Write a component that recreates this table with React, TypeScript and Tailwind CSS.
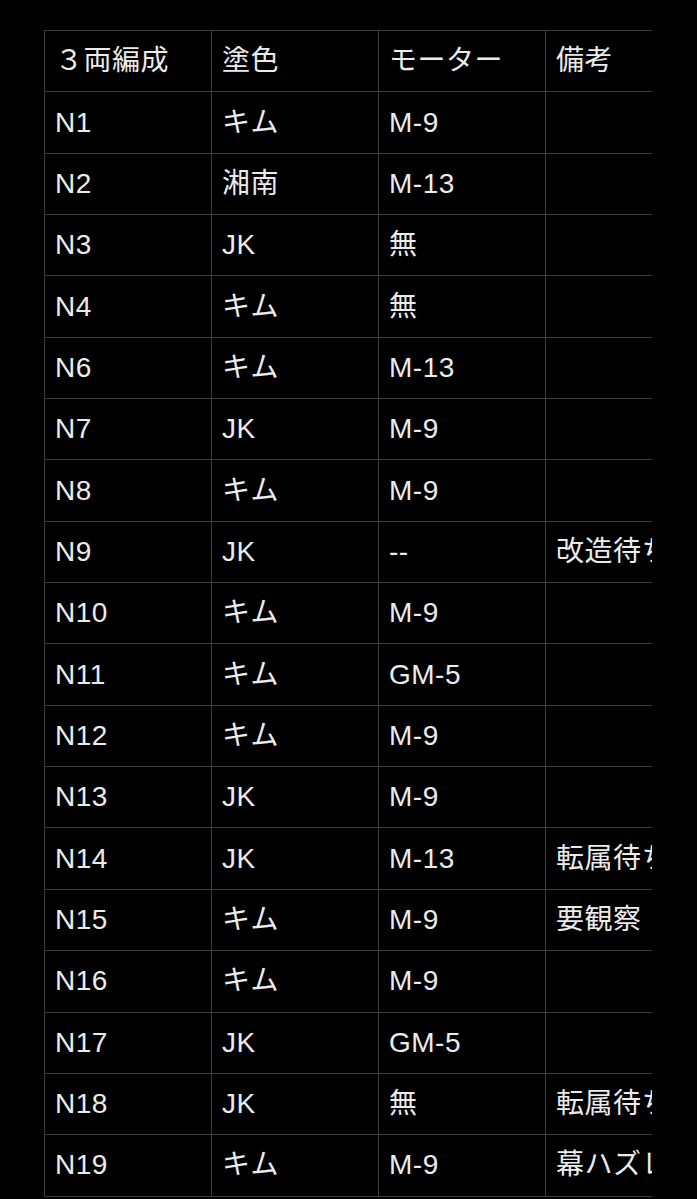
const header = ["３両編成", "塗色", "モーター", "備考"];

const rows: [string, string, string, string][] = [
  ["N1", "キム", "M-9", ""],
  ["N2", "湘南", "M-13", ""],
  ["N3", "JK", "無", ""],
  ["N4", "キム", "無", ""],
  ["N6", "キム", "M-13", ""],
  ["N7", "JK", "M-9", ""],
  ["N8", "キム", "M-9", ""],
  ["N9", "JK", "--", "改造待ち"],
  ["N10", "キム", "M-9", ""],
  ["N11", "キム", "GM-5", ""],
  ["N12", "キム", "M-9", ""],
  ["N13", "JK", "M-9", ""],
  ["N14", "JK", "M-13", "転属待ち"],
  ["N15", "キム", "M-9", "要観察"],
  ["N16", "キム", "M-9", ""],
  ["N17", "JK", "GM-5", ""],
  ["N18", "JK", "無", "転属待ち"],
  ["N19", "キム", "M-9", "幕ハズレ"],
];

const font = {
  fontFamily: '"Liberation Sans", "Noto Sans CJK JP", sans-serif',
};

const Cell = ({ text }: { text: string }) => (
  <td className="w-[167px] min-w-[167px] h-[61.35px] border border-[#3c3c3c] pl-[10px] pr-0 align-middle whitespace-nowrap overflow-hidden text-[28px] tracking-[0.5px] leading-none text-[#ebebeb]">
    {text}
  </td>
);

const App = () => {
  return (
    <div className="min-h-screen bg-black pt-[30px] pl-[44px]" style={font}>
      {/* table is cut off on the right, like a scrolled view */}
      <div className="w-[608px] overflow-hidden">
        <table className="border-collapse table-fixed w-[668px]">
          <tbody>
            <tr>
              {header.map((h) => (
                <Cell key={h} text={h} />
              ))}
            </tr>
            {rows.map((r) => (
              <tr key={r[0]}>
                {r.map((c, i) => (
                  <Cell key={i} text={c} />
                ))}
              </tr>
            ))}
          </tbody>
        </table>
      </div>
    </div>
  );
};

export default App;
